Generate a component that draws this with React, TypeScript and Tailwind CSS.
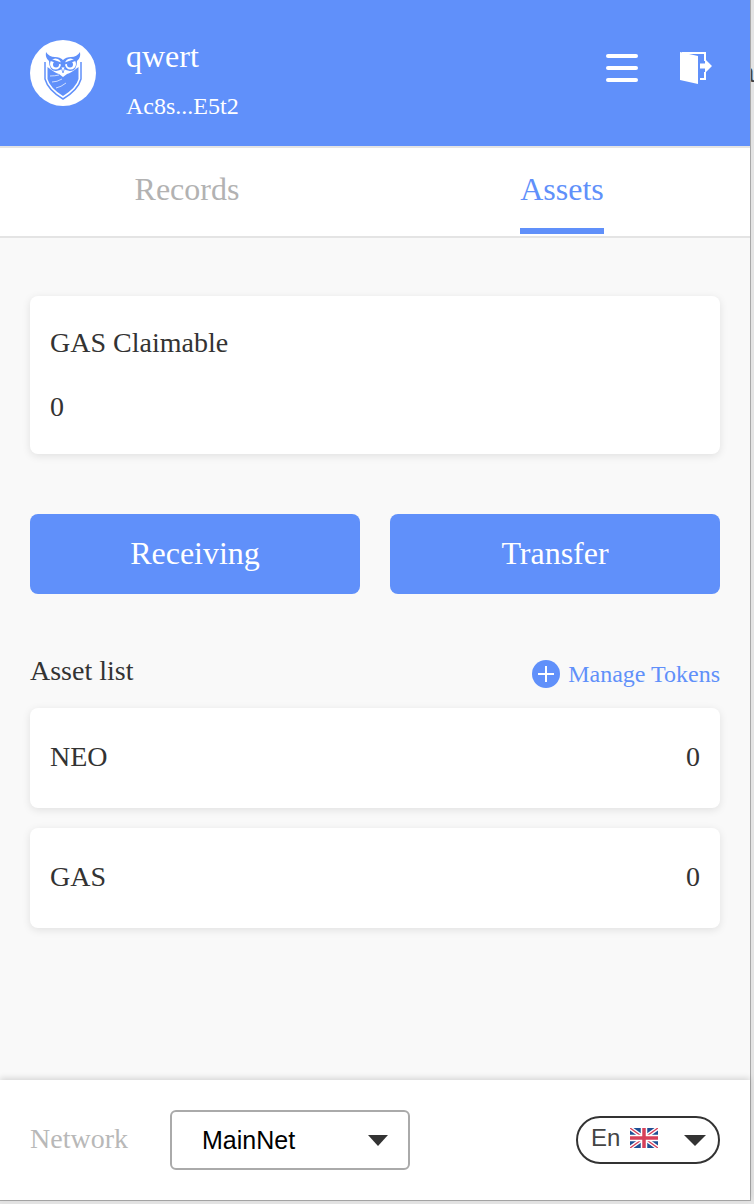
import type { ReactNode } from 'react';

const SERIF = 'font-["Liberation_Serif",serif]';

function OwlLogo() {
  return (
    <svg width="66" height="66" viewBox="0 0 66 66" className="shrink-0">
      <circle cx="33" cy="33" r="33" fill="#fff" />
      {/* shield outline */}
      <path
        d="M15 22 L15 39 Q18 50 33 59 Q48 50 51 39 L51 22"
        fill="none"
        stroke="#6090fa"
        strokeWidth="1.500"
        strokeLinejoin="round"
      />
      {/* bandana */}
      <path d="M17.500 27 Q25 33 29 34 L33 37 L37 34 Q41 33 48.500 27 L48.500 39 Q46 48 33 56 Q20 48 17.500 39 Z" fill="#6090fa" />
      <path d="M20 36 Q25 36 29 35 M22 42 Q27 42 32 39 M26 48 Q31 47 36 43" stroke="#fff" strokeWidth="0.700" fill="none" />
      {/* head and ears */}
      <path
        d="M16 12 Q19 17 25 17 Q30 17 33 20 Q36 17 41 17 Q47 17 50 12 Q51 18 47 21 Q47 31 40 31 Q36 31 33 28 Q30 31 26 31 Q19 31 19 21 Q15 18 16 12 Z"
        fill="#6090fa"
      />
      {/* eyes */}
      <circle cx="25.500" cy="24" r="5.500" fill="#fff" />
      <circle cx="40.500" cy="24" r="5.500" fill="#fff" />
      <circle cx="26" cy="24.500" r="3" fill="#6090fa" />
      <circle cx="40" cy="24.500" r="3" fill="#6090fa" />
      <path d="M19.500 19.500 L31 23.500 M46.500 19.500 L35 23.500" stroke="#6090fa" strokeWidth="2" />
      {/* beak */}
      <path d="M31 27 L35 27 L33 33 Z" fill="#fff" stroke="#6090fa" strokeWidth="0.800" />
    </svg>
  );
}

function DoorIcon() {
  return (
    <svg width="32" height="32" viewBox="0 0 32 32">
      <path d="M0 0 L18 4 L18 32 L0 28 Z" fill="#fff" />
      <path d="M2 0 H26 V9 H24 V2 H2 Z M20 26 H24 V20 H26 V28 H20 Z" fill="#fff" />
      <path d="M20 11.500 H25 V7 L32 14 L25 21 V16.500 H20 Z" fill="#fff" />
    </svg>
  );
}

function UkFlag() {
  return (
    <svg width="28" height="20" viewBox="0 0 28 20" className="shrink-0">
      <rect width="28" height="20" fill="#1f4f94" />
      <path d="M0 0 L28 20 M28 0 L0 20" stroke="#fff" strokeWidth="4" />
      <path d="M0 0 L28 20 M28 0 L0 20" stroke="#d6405a" strokeWidth="1.400" />
      <path d="M14 0 V20 M0 10 H28" stroke="#fff" strokeWidth="6.500" />
      <path d="M14 0 V20 M0 10 H28" stroke="#d6405a" strokeWidth="3.500" />
    </svg>
  );
}

function Caret({ className }: { className: string }) {
  return <span className={`h-0 w-0 border-t-[#333] border-x-transparent ${className}`} />;
}

function Card({ children, className }: { children: ReactNode; className: string }) {
  return (
    <div className={`rounded-lg bg-white px-5 shadow-[0_2px_8px_rgba(0,0,0,0.1)] ${className}`}>{children}</div>
  );
}

function AssetRow({ name, value }: { name: string; value: string }) {
  return (
    <Card className="flex h-[100px] items-center justify-between pb-[2px] text-[28px] text-[#333]">
      <span>{name}</span>
      <span>{value}</span>
    </Card>
  );
}

export default function App() {
  return (
    <div className={`flex h-[1204px] w-[754px] overflow-hidden bg-[#e4e4e4] ${SERIF}`}>
      <div className="flex h-[1201px] w-[751px] shrink-0 flex-col border-r border-b border-[#a8a8a8] bg-[#f9f9f9]">
        <header className="flex h-[146px] shrink-0 items-center bg-[#6090fa] pr-[38px] pl-[30px] text-white">
          <OwlLogo />
          <div className="mt-[12px] ml-[30px] flex flex-1 flex-col">
            <span className="text-[32px] leading-[36px]">qwert</span>
            <span className="mt-[18px] text-[24px] leading-[28px]">Ac8s...E5t2</span>
          </div>
          <div className="mr-[42px] mb-[10px] flex w-8 flex-col gap-2">
            <span className="h-1 rounded-full bg-white" />
            <span className="h-1 rounded-full bg-white" />
            <span className="h-1 rounded-full bg-white" />
          </div>
          <div className="mb-[10px]">
            <DoorIcon />
          </div>
        </header>

        <nav className="grid h-[92px] shrink-0 grid-cols-2 border-y-2 border-[#e4e4e4] bg-white text-[32px]">
          <div className="flex justify-center pt-[23px] pr-[1px] leading-[37px] text-[#b2b2b2]">Records</div>
          <div className="flex justify-center pt-[23px] pr-[1px] leading-[37px] text-[#6090fa]">
            <span className="h-[63px] border-b-[6px] border-[#6090fa]">Assets</span>
          </div>
        </nav>

        <main className="flex flex-1 flex-col px-[30px] pt-[58px]">
          <Card className="flex h-[158px] flex-col justify-center gap-[32px] text-[28px] leading-[32px] text-[#333]">
            <span>GAS Claimable</span>
            <span>0</span>
          </Card>

          <div className="mt-[60px] grid grid-cols-2 gap-[30px]">
            <button type="button" className="h-20 rounded-lg bg-[#6090fa] pb-[2px] text-[32px] text-white">Receiving</button>
            <button type="button" className="h-20 rounded-lg bg-[#6090fa] pb-[2px] text-[32px] text-white">Transfer</button>
          </div>

          <div className="mt-[60px] flex h-[54px] items-start justify-between pt-[1px]">
            <span className="text-[28px] leading-[32px] text-[#333]">Asset list</span>
            <span className="flex items-center gap-2 pt-[5px] text-[24px] leading-[28px] text-[#6090fa]">
              <span className="relative h-7 w-7 rounded-full bg-[#6090fa]">
                <span className="absolute top-[13px] left-[6px] h-[2px] w-4 bg-white" />
                <span className="absolute top-[6px] left-[13px] h-4 w-[2px] bg-white" />
              </span>
              Manage Tokens
            </span>
          </div>

          <div className="flex flex-col gap-5">
            <AssetRow name="NEO" value="0" />
            <AssetRow name="GAS" value="0" />
          </div>
        </main>

        <footer className="flex h-[120px] shrink-0 items-center bg-white pr-[30px] pl-[30px] shadow-[0_-2px_6px_rgba(0,0,0,0.14)]">
          <span className="w-[140px] pb-[2px] text-[28px] text-[#b8b8b8]">Network</span>
          <div className="flex h-[60px] w-[240px] items-center justify-between rounded-md border-2 border-[#aaa] pr-[20px] pl-[30px] font-['Liberation_Sans',sans-serif] text-[25px] text-black">
            <span className="mt-[2px]">MainNet</span>
            <Caret className="border-x-[10px] border-t-[11px]" />
          </div>
          <div className="ml-auto flex h-12 w-[144px] items-center rounded-full border-2 border-[#333] pr-[12px] pl-[13px] font-['Liberation_Sans',sans-serif] text-[24px] text-[#444]">
            <span className="-mt-1">En</span>
            <span className="ml-[10px] -mt-1">
              <UkFlag />
            </span>
            <Caret className="ml-auto border-x-[11px] border-t-[11px]" />
          </div>
        </footer>
      </div>
      {/* window behind the popup: a sliver of its text shows in the strip */}
      <div className="relative flex-1 overflow-hidden">
        <span className="absolute top-[52px] -left-[12px] font-['Liberation_Sans',sans-serif] text-[28px] text-[#444]">a</span>
      </div>
    </div>
  );
}
